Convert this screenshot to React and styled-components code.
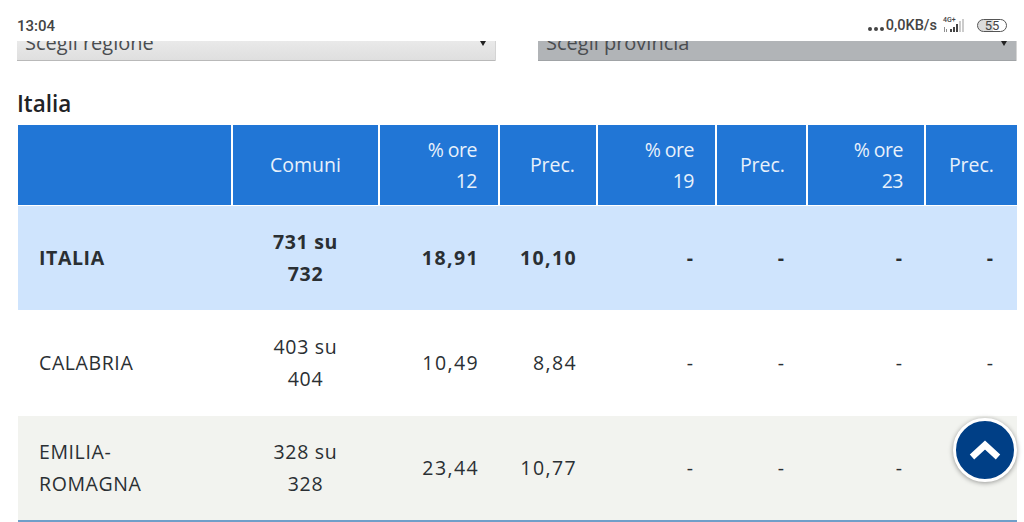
import React from 'react';
import styled, { createGlobalStyle } from 'styled-components';

const GlobalStyle = createGlobalStyle`
    html, body {
        margin: 0;
        height: 100%;
        overflow: hidden;
        background: #fff;
    }
`;

const Page = styled.div`
    width: 1024px;
    height: 522px;
    overflow: hidden;
    font-family: "Open Sans", "Noto Sans", sans-serif;
    color: #2a2f33;
`;

const StatusBar = styled.div`
    height: 41px;
    box-sizing: border-box;
    padding: 17px 17px 0;
    display: flex;
    justify-content: space-between;
    align-items: flex-start;
    font-family: Roboto, sans-serif;
    font-weight: 500;
    color: #444;
`;

const Clock = styled.span`
    font-size: 15px;
    line-height: 18px;
`;

const StatusRight = styled.div`
    display: flex;
    align-items: center;
    height: 17px;
`;

const Dots = styled.span`
    display: flex;
    gap: 2px;
    margin: 6px 2px 0 0;
`;

const Dot = styled.i`
    width: 4px;
    height: 4px;
    border-radius: 50%;
    background: #444;
`;

const Speed = styled.span`
    font-size: 14.5px;
    line-height: 17px;
`;

const Network = styled.div`
    position: relative;
    width: 26px;
    height: 17px;
    margin: 0 8px 0 6px;
`;

const NetworkLabel = styled.span`
    position: absolute;
    left: 0;
    top: -1px;
    font-size: 7px;
    line-height: 8px;
`;

const Battery = styled.span`
    width: 30px;
    height: 13px;
    box-sizing: border-box;
    border: 1px solid #555;
    border-radius: 7px;
    background: linear-gradient(90deg, #dcdcdc 55%, #fff 55%);
    font-size: 13px;
    font-weight: 400;
    line-height: 11px;
    text-align: center;
`;

const Filters = styled.div`
    display: flex;
    justify-content: space-between;
    padding: 0 8px 0 17px;
`;

const SelectBox = styled.div`
    position: relative;
    width: 478px;
    height: 20px;
    overflow: hidden;
    box-sizing: border-box;
    border-bottom: 1px solid ${p => (p.$disabled ? '#a0a3a6' : '#b9b9b9')};
    background: ${p => (p.$disabled ? '#b1b4b7' : 'linear-gradient(#e9e9e9, #dfdfdf)')};
    box-shadow: 1px 0 0 #d4d4d4;
`;

const SelectText = styled.span`
    display: block;
    margin-top: -11px;
    padding-left: 8px;
    font-size: 20px;
    line-height: 26px;
    color: #4a4d50;
`;

const SelectArrow = styled.i`
    position: absolute;
    right: 9px;
    top: 0;
    width: 0;
    height: 0;
    border-left: 3px solid transparent;
    border-right: 3px solid transparent;
    border-top: 5px solid #222;
`;

const Title = styled.h2`
    margin: 28px 0 6px 17px;
    font-size: 22.5px;
    line-height: 30px;
    font-weight: 600;
    color: #1f2326;
`;

const Table = styled.table`
    margin-left: 18px;
    width: 999px;
    table-layout: fixed;
    border-collapse: collapse;
    border-spacing: 0;
    font-size: 19.5px;
`;

const HeadCell = styled.th`
    height: 80px;
    box-sizing: border-box;
    padding: 0 21px;
    background: #2176d6;
    color: #e8f1fb;
    border-left: 2px solid #fff;
    border-bottom: 1px solid #fff;
    font-weight: 400;
    line-height: 31px;
    letter-spacing: ${p => p.$spacing || 0}px;
    text-align: ${p => p.$align || 'right'};

    &:first-child {
        border-left: 0;
    }

    &:last-child {
        padding-right: 23px;
    }
`;

const Row = styled.tr`
    background: ${p => p.$bg};
    font-weight: ${p => (p.$bold ? 700 : 400)};
`;

const Cell = styled.td`
    height: ${p => p.$height}px;
    box-sizing: border-box;
    padding: 0 21px;
    line-height: 32px;
    text-align: left;
`;

const CountCell = styled(Cell)`
    letter-spacing: .7px;
    text-align: center;
`;

const NumberCell = styled(Cell)`
    padding-right: 20px;
    letter-spacing: 1.4px;
    text-align: right;
`;

const DashCell = styled(Cell)`
    padding-right: 23px;
    text-align: right;

    &:last-child {
        padding-right: 24px;
    }
`;

const NameCell = styled(Cell)`
    letter-spacing: .6px;
`;

const TopButton = styled.button`
    position: fixed;
    left: 953px;
    top: 418px;
    width: 64px;
    height: 64px;
    padding: 0;
    display: flex;
    align-items: center;
    justify-content: center;
    border: 3px solid #fff;
    border-radius: 50%;
    background: #003f86;
    box-shadow: 0 1px 5px rgba(0, 0, 0, .4);
`;

const BottomLine = styled.div`
    margin-left: 18px;
    width: 999px;
    height: 2px;
    background: #6f9fc9;
`;

const columns = [214, 147, 120, 98, 119, 91, 118, 92];

const rows = [
    { name: 'ITALIA', comuni: ['731 su', '732'], ore: '18,91', prec: '10,10', bg: '#cfe4fd', bold: true, height: 105 },
    { name: 'CALABRIA', comuni: ['403 su', '404'], ore: '10,49', prec: '8,84', bg: '#fff', height: 106 },
    { name: ['EMILIA-', 'ROMAGNA'], comuni: ['328 su', '328'], ore: '23,44', prec: '10,77', bg: '#f2f3ef', height: 104 }
];

const Lines = ({ parts }) => (
    Array.isArray(parts)
        ? parts.map((part, i) => <React.Fragment key={part}>{i > 0 && <br />}{part}</React.Fragment>)
        : parts
);

const SignalIcon = () => (
    <svg width="26" height="17" viewBox="0 0 26 17" style={{ position: 'absolute', left: 0, top: 0 }}>
        <g fill="#444">
            <rect x="1" y="10" width="1" height="5" opacity=".6" />
            <rect x="3" y="12" width="1" height="3" opacity=".6" />
            <rect x="7" y="12" width="2" height="3" />
            <rect x="10" y="10" width="2" height="5" />
            <rect x="13" y="7" width="2" height="8" />
        </g>
        <g fill="#ccc">
            <rect x="16" y="4" width="2" height="11" />
            <rect x="19" y="2" width="2" height="13" />
        </g>
    </svg>
);

const App = () => (
    <Page>
        <GlobalStyle />
        <StatusBar>
            <Clock>13:04</Clock>
            <StatusRight>
                <Dots><Dot /><Dot /><Dot /></Dots>
                <Speed>0,0KB/s</Speed>
                <Network>
                    <SignalIcon />
                    <NetworkLabel>4G+</NetworkLabel>
                </Network>
                <Battery>55</Battery>
            </StatusRight>
        </StatusBar>

        <Filters>
            <SelectBox>
                <SelectText>Scegli regione</SelectText>
                <SelectArrow />
            </SelectBox>
            <SelectBox $disabled>
                <SelectText>Scegli provincia</SelectText>
                <SelectArrow />
            </SelectBox>
        </Filters>

        <Title>Italia</Title>

        <Table>
            <colgroup>
                {columns.map((width, i) => <col key={i} width={width} />)}
            </colgroup>
            <thead>
                <tr>
                    <HeadCell $align="left" />
                    <HeadCell $align="center">Comuni</HeadCell>
                    <HeadCell $spacing={-0.5}>% ore<br />12</HeadCell>
                    <HeadCell>Prec.</HeadCell>
                    <HeadCell $spacing={-0.5}>% ore<br />19</HeadCell>
                    <HeadCell>Prec.</HeadCell>
                    <HeadCell $spacing={-0.5}>% ore<br />23</HeadCell>
                    <HeadCell>Prec.</HeadCell>
                </tr>
            </thead>
            <tbody>
                {rows.map(row => (
                    <Row key={row.ore} $bg={row.bg} $bold={row.bold}>
                        <NameCell $height={row.height}><Lines parts={row.name} /></NameCell>
                        <CountCell $height={row.height}><Lines parts={row.comuni} /></CountCell>
                        <NumberCell $height={row.height}>{row.ore}</NumberCell>
                        <NumberCell $height={row.height}>{row.prec}</NumberCell>
                        <DashCell $height={row.height}>-</DashCell>
                        <DashCell $height={row.height}>-</DashCell>
                        <DashCell $height={row.height}>-</DashCell>
                        <DashCell $height={row.height}>-</DashCell>
                    </Row>
                ))}
            </tbody>
        </Table>
        <BottomLine />

        <TopButton aria-label="Torna su">
            <svg width="32" height="20" viewBox="0 0 32 20">
                <path d="M3 17 L16 5 L29 17" fill="none" stroke="#fff" strokeWidth="6.5" />
            </svg>
        </TopButton>
    </Page>
);

export default App;
